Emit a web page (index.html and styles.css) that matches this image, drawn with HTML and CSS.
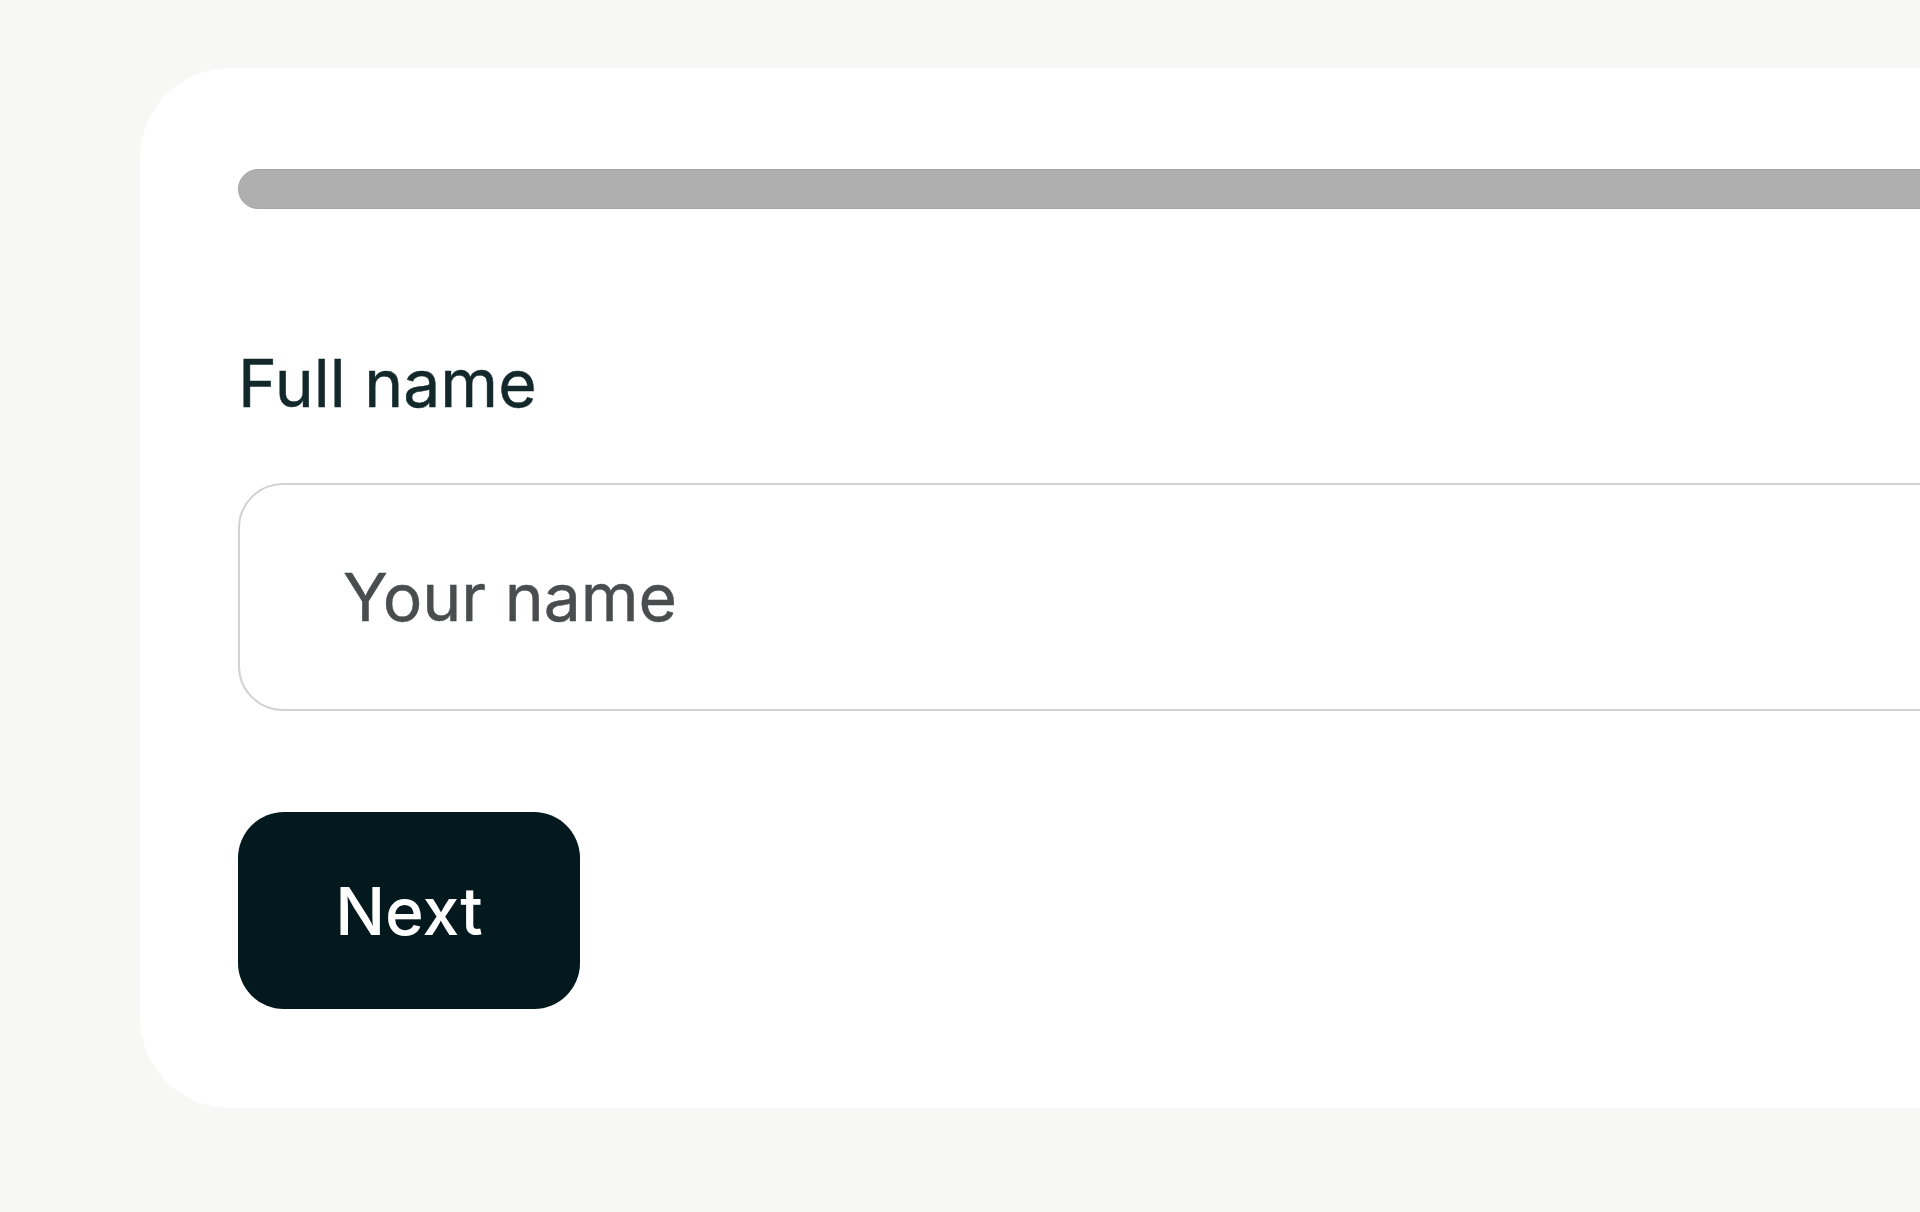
FILE: index.html
```html
<!DOCTYPE html>
<html lang="en">
<head>
<meta charset="utf-8">
<title>Full name</title>
<link rel="stylesheet" href="styles.css">
</head>
<body>
<main class="page">
  <section class="card">
    <div class="progress"></div>
    <form class="form">
      <label class="label" for="name">Full name</label>
      <input class="input" id="name" type="text" placeholder="Your name">
      <div class="actions">
        <button class="btn" type="button">Next</button>
      </div>
    </form>
  </section>
</main>
</body>
</html>
```

FILE: styles.css
```css
html, body {
  margin: 0;
  padding: 0;
  background: #f7f7f5;
  overflow: hidden;
  height: 100%;
}

.page {
  padding: 68px 0 0 140px;
  font-family: "Inter", "Liberation Sans", sans-serif;
}

.card {
  width: 2000px;
  box-sizing: border-box;
  background: #ffffff;
  border-radius: 90px;
  padding: 101px 98px 99px 98px;
}

.progress {
  height: 40px;
  box-sizing: border-box;
  border-radius: 20px;
  background: #afafaf;
  border: 1px solid #a6a6a6;
}

.form {
  display: flex;
  flex-direction: column;
  align-items: flex-start;
}

.label {
  margin-top: 135px;
  font-size: 66px;
  line-height: 79px;
  color: #12282b;
  font-weight: 400;
  -webkit-text-stroke: 0.5px #12282b;
}

.input {
  margin-top: 60px;
  width: 100%;
  height: 228px;
  box-sizing: border-box;
  border: 2px solid #d2d2d2;
  border-radius: 45px;
  padding: 0 0 0 103px;
  font-family: inherit;
  font-size: 66px;
  color: #1a1a1a;
  background: #ffffff;
  outline: none;
  -webkit-text-stroke: 0.5px #4a4d4e;
}

.input::placeholder {
  color: #4a4d4e;
  opacity: 1;
}

.actions {
  margin-top: 101px;
}

.btn {
  width: 342px;
  height: 197px;
  border: none;
  border-radius: 46px;
  background: #04191d;
  color: #ffffff;
  font-family: inherit;
  font-size: 66px;
  font-weight: 500;
  padding: 0;
  cursor: pointer;
}
```
